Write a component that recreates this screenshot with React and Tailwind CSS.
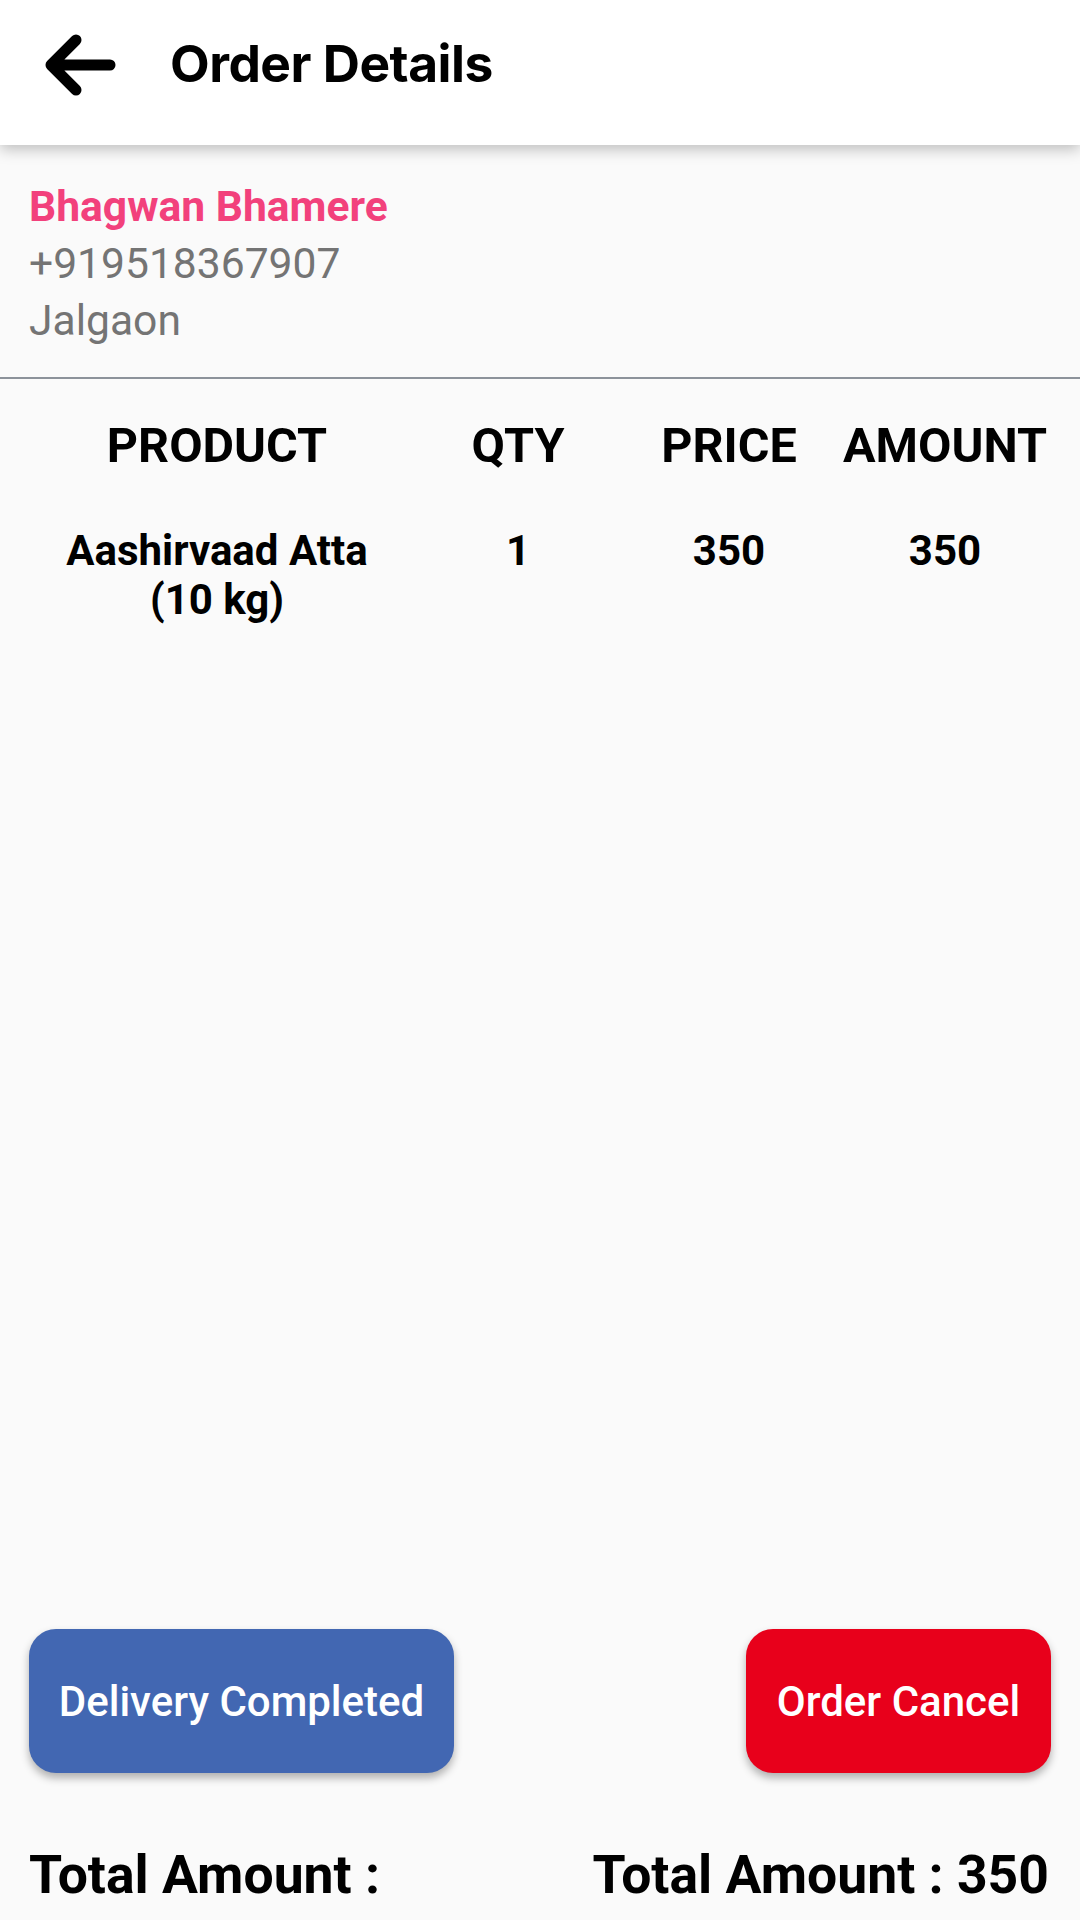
import React from 'react';

const items = [
  { name: 'Aashirvaad Atta (10 kg)', qty: 1, price: 350, amount: 350 },
];

function BackArrow() {
  return (
    <svg width="72" height="62" viewBox="0 0 72 62" fill="none">
      <path
        d="M32 6 L7 31 L32 56 M7 31 L66 31"
        stroke="#000"
        strokeWidth="11"
        strokeLinecap="round"
        strokeLinejoin="round"
      />
    </svg>
  );
}

export default function App() {
  const total = items.reduce((s, i) => s + i.amount, 0);

  return (
    <div className="flex h-[1920px] flex-col bg-[#fafafa] font-['Roboto',sans-serif] text-black">
      <header className="relative z-10 flex h-[145px] shrink-0 items-center bg-white pb-[18px] shadow-[0_4px_14px_rgba(0,0,0,0.25)]">
        <div className="ml-[44px] mt-[2px]">
          <BackArrow />
        </div>
        <h1 className="ml-[54px] font-['Inter',sans-serif] text-[51.5px] font-bold tracking-[-0.5px]">
          Order Details
        </h1>
      </header>

      <div className="px-[29px] pt-[33px] pb-[28px] text-[42.6px] leading-[57px]">
        <div className="font-bold text-[#f2417c]">Bhagwan Bhamere</div>
        <div className="text-[#747474]">+919518367907</div>
        <div className="text-[#747474]">Jalgaon</div>
      </div>
      <div className="h-[2px] bg-[#8c929a]" />

      <div className="flex-1 pt-[39px]">
        <div className="grid grid-cols-[434px_168px_254px_178px] text-[48.5px] font-bold leading-[56px]">
          <div className="flex justify-center">PRODUCT</div>
          <div className="flex justify-center">QTY</div>
          <div className="flex justify-center">PRICE</div>
          <div className="flex justify-center whitespace-nowrap">AMOUNT</div>
        </div>
        {items.map((it) => (
          <div
            key={it.name}
            className="mt-[52px] grid grid-cols-[434px_168px_254px_178px] text-[42px] font-bold leading-[49px]"
          >
            <div className="px-[40px] text-center">{it.name}</div>
            <div className="flex justify-center">{it.qty}</div>
            <div className="flex justify-center">{it.price}</div>
            <div className="flex justify-center">{it.amount}</div>
          </div>
        ))}
      </div>

      <div className="flex items-center justify-between px-[29px]">
        <button className="h-[144px] w-[425px] rounded-[27px] bg-[#4267b2] text-[42px] font-medium text-white shadow-[0_5px_8px_rgba(0,0,0,0.3)]">
          Delivery Completed
        </button>
        <button className="h-[144px] w-[305px] rounded-[27px] bg-[#e8001b] text-[42px] font-medium text-white shadow-[0_5px_8px_rgba(0,0,0,0.3)]">
          Order Cancel
        </button>
      </div>

      <div className="mt-[72px] flex items-center justify-between pl-[29px] pr-[31px] pb-[15px] text-[53.5px] font-bold leading-[60px]">
        <div>Total Amount :</div>
        <div>Total Amount : {total}</div>
      </div>
    </div>
  );
}
